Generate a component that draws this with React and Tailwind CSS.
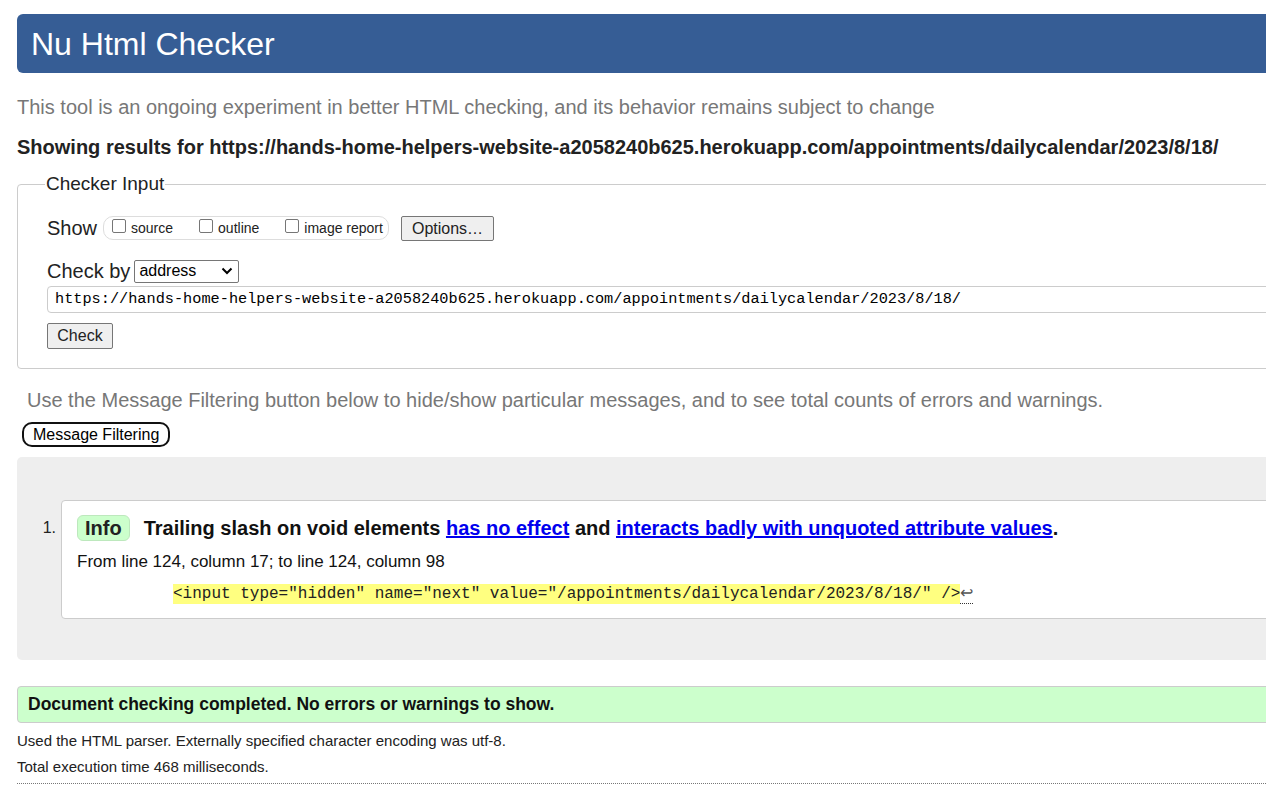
import React from 'react';

const Checkbox = ({ label }) => (
  <label className="flex items-center gap-[5px]">
    <span className="w-[14px] h-[14px] border border-[#767676] rounded-[2px] bg-white mt-[-5px]" />
    <span className="text-[14px] leading-none text-[#222]">{label}</span>
  </label>
);

export default function App() {
  return (
    <div className="w-[1266px] h-[812px] overflow-hidden bg-white text-black font-['Liberation_Sans',Arial,sans-serif]">
      <div className="pl-[17px] pt-[14px] w-[1400px]">
        {/* header */}
        <div className="h-[59px] bg-[#365d95] rounded-l-[6px] flex items-center pl-[14px]">
          <h1 className="text-[32px] text-white leading-none">Nu Html Checker</h1>
        </div>

        <p className="mt-[24px] text-[20px] leading-none text-[#777]">
          This tool is an ongoing experiment in better HTML checking, and its behavior remains subject to change
        </p>
        <p className="mt-[20px] text-[20px] leading-none font-bold text-[#222]">
          Showing results for https://hands-home-helpers-website-a2058240b625.herokuapp.com/appointments/dailycalendar/2023/8/18/
        </p>

        {/* checker input fieldset */}
        <fieldset className="mt-[13px] border border-[#ccc] rounded-[4px] pl-[29px] pt-[9px] h-[199px]">
          <legend className="text-[19px] text-[#222] px-[1px] ml-[-2px]">Checker Input</legend>
          <div className="flex items-center h-[25px] mt-[8px]">
            <span className="text-[20px] leading-none text-[#222]">Show</span>
            <div className="ml-[6px] flex items-center gap-[26px] h-[24px] border border-[#ddd] rounded-[10px] pl-[8px] w-[286px]">
              <Checkbox label="source" />
              <Checkbox label="outline" />
              <Checkbox label="image report" />
            </div>
            <button className="ml-[12px] h-[25px] w-[93px] border border-[#767676] rounded-[2px] bg-[#efefef] text-[16px] text-[#222]">Options…</button>
          </div>
          <div className="flex items-center h-[23px] mt-[19px]">
            <span className="text-[20px] leading-none text-[#222]">Check by</span>
            <div className="ml-[4px] h-[23px] w-[105px] border border-[#767676] rounded-[2px] flex items-center justify-between pl-[4px] pr-[5px]">
              <span className="text-[16px] text-black">address</span>
              <svg width="12" height="8" viewBox="0 0 12 8"><path d="M1.5 1.5 L6 6 L10.5 1.5" fill="none" stroke="#000" strokeWidth="2" /></svg>
            </div>
          </div>
          <div className="mt-[3px] h-[27px] border border-[#ccc] rounded-l-[4px] flex items-center pl-[7px] w-[1400px]">
            <span className="text-[15.25px] text-black font-['Liberation_Mono',monospace]">https://hands-home-helpers-website-a2058240b625.herokuapp.com/appointments/dailycalendar/2023/8/18/</span>
          </div>
          <button className="mt-[10px] h-[26px] w-[66px] border border-[#767676] rounded-[2px] bg-[#efefef] text-[16px] text-[#222]">Check</button>
        </fieldset>

        <p className="mt-[21px] ml-[10px] text-[20px] leading-none text-[#777]">
          Use the Message Filtering button below to hide/show particular messages, and to see total counts of errors and warnings.
        </p>
        <button className="mt-[12px] ml-[5px] h-[25px] px-[9px] border-2 border-[#111] rounded-[10px] bg-white text-[16px] text-black leading-none">Message Filtering</button>

        {/* messages */}
        <div className="mt-[10px] h-[203px] bg-[#eee] rounded-l-[5px] pt-[43px]">
          <div className="flex">
            <span className="w-[44px] text-right pr-[5px] pt-[20px] text-[16px] text-[#222] leading-none">1.</span>
            <div className="bg-white border border-[#ccc] rounded-l-[4px] h-[119px] flex-1 pl-[15px] pt-[12px]">
              <div className="flex items-center">
                <span className="h-[26px] px-[7px] flex items-center rounded-[6px] border border-[#bde8bd] bg-[#ccffcc] text-[20px] font-bold text-[#222]">Info</span>
                <span className="ml-[14px] text-[20px] font-bold text-[#111]">
                  Trailing slash on void elements <a className="text-[#00e] underline">has no effect</a> and <a className="text-[#00e] underline">interacts badly with unquoted attribute values</a>.
                </span>
              </div>
              <p className="mt-[10px] text-[17px] text-[#111] leading-none">From line 124, column 17; to line 124, column 98</p>
              <div className="mt-[13px] pl-[96px] flex items-center">
                <code className="bg-[#ffff80] text-[16px] leading-[20px] text-[#222] font-['Liberation_Mono',monospace]">&lt;input type="hidden" name="next" value="/appointments/dailycalendar/2023/8/18/" /&gt;</code>
                <span className="text-[16px] leading-[20px] text-[#555] border-b border-dotted border-[#333]">↩</span>
              </div>
            </div>
          </div>
        </div>

        <div className="mt-[26px] h-[37px] bg-[#ccffcc] border border-[#ccc] rounded-l-[4px] flex items-center pl-[10px]">
          <span className="text-[17.5px] font-bold text-[#111]">Document checking completed. No errors or warnings to show.</span>
        </div>
        <p className="mt-[10px] text-[15px] leading-none text-[#222]">Used the HTML parser. Externally specified character encoding was utf-8.</p>
        <p className="mt-[11px] text-[15px] leading-none text-[#222]">Total execution time 468 milliseconds.</p>
        <div className="mt-[9px] border-t border-dotted border-[#777]" />
      </div>
    </div>
  );
}
